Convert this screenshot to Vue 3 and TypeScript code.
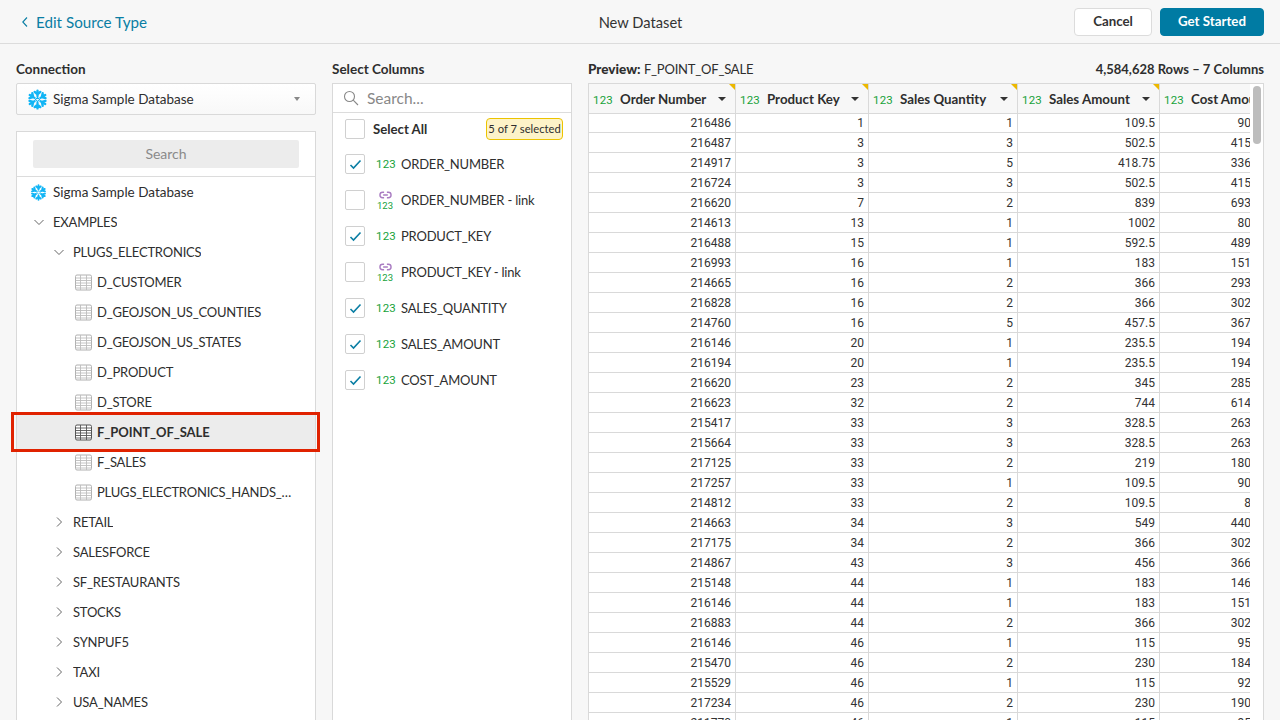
<script setup lang="ts">
interface TreeRow { label: string; depth: number; kind: 'open' | 'closed' | 'table' | 'db'; selected?: boolean }
const tree: TreeRow[] = [
  { label: 'Sigma Sample Database', depth: 0, kind: 'db' },
  { label: 'EXAMPLES', depth: 0, kind: 'open' },
  { label: 'PLUGS_ELECTRONICS', depth: 1, kind: 'open' },
  { label: 'D_CUSTOMER', depth: 2, kind: 'table' },
  { label: 'D_GEOJSON_US_COUNTIES', depth: 2, kind: 'table' },
  { label: 'D_GEOJSON_US_STATES', depth: 2, kind: 'table' },
  { label: 'D_PRODUCT', depth: 2, kind: 'table' },
  { label: 'D_STORE', depth: 2, kind: 'table' },
  { label: 'F_POINT_OF_SALE', depth: 2, kind: 'table', selected: true },
  { label: 'F_SALES', depth: 2, kind: 'table' },
  { label: 'PLUGS_ELECTRONICS_HANDS_ON_LAB_DATA', depth: 2, kind: 'table' },
  { label: 'RETAIL', depth: 1, kind: 'closed' },
  { label: 'SALESFORCE', depth: 1, kind: 'closed' },
  { label: 'SF_RESTAURANTS', depth: 1, kind: 'closed' },
  { label: 'STOCKS', depth: 1, kind: 'closed' },
  { label: 'SYNPUF5', depth: 1, kind: 'closed' },
  { label: 'TAXI', depth: 1, kind: 'closed' },
  { label: 'USA_NAMES', depth: 1, kind: 'closed' },
]
const columns = [
  { label: 'ORDER_NUMBER', checked: true, link: false },
  { label: 'ORDER_NUMBER - link', checked: false, link: true },
  { label: 'PRODUCT_KEY', checked: true, link: false },
  { label: 'PRODUCT_KEY - link', checked: false, link: true },
  { label: 'SALES_QUANTITY', checked: true, link: false },
  { label: 'SALES_AMOUNT', checked: true, link: false },
  { label: 'COST_AMOUNT', checked: true, link: false },
]
const headers = ['Order Number', 'Product Key', 'Sales Quantity', 'Sales Amount', 'Cost Amount']
const rows: string[][] = [
  ['216486','1','1','109.5','90'],['216487','3','3','502.5','415'],['214917','3','5','418.75','336'],
  ['216724','3','3','502.5','415'],['216620','7','2','839','693'],['214613','13','1','1002','80'],
  ['216488','15','1','592.5','489'],['216993','16','1','183','151'],['214665','16','2','366','293'],
  ['216828','16','2','366','302'],['214760','16','5','457.5','367'],['216146','20','1','235.5','194'],
  ['216194','20','1','235.5','194'],['216620','23','2','345','285'],['216623','32','2','744','614'],
  ['215417','33','3','328.5','263'],['215664','33','3','328.5','263'],['217125','33','2','219','180'],
  ['217257','33','1','109.5','90'],['214812','33','2','109.5','8'],['214663','34','3','549','440'],
  ['217175','34','2','366','302'],['214867','43','3','456','366'],['215148','44','1','183','146'],
  ['216146','44','1','183','151'],['216883','44','2','366','302'],['216146','46','1','115','95'],
  ['215470','46','2','230','184'],['215529','46','1','115','92'],['217234','46','2','230','190'],
  ['211770','46','1','115','95'],
]
const armAngles = [0, 60, 120, 180, 240, 300]
</script>

<template>
  <div class="page">
    <header class="topbar">
      <a class="back">
        <svg width="8" height="12" viewBox="0 0 8 12"><path d="M6 1.500 1.800 6 6 10.500" fill="none" stroke="#0a7ea4" stroke-width="1.100" /></svg>
        <span>Edit Source Type</span>
      </a>
      <div class="title">New Dataset</div>
      <div class="actions">
        <button class="btn cancel">Cancel</button>
        <button class="btn primary">Get Started</button>
      </div>
    </header>

    <main class="body">
      <section class="left">
        <h3 class="label">Connection</h3>
        <div class="select">
          <svg class="flake" width="21" height="21" viewBox="0 0 24 24"><use href="#flake" /></svg>
          <span class="select-text">Sigma Sample Database</span>
          <span class="caret"></span>
        </div>
        <div class="tree">
          <div class="tree-search"><div class="tree-search-box">Search</div></div>
          <div class="tree-list">
            <div v-for="row in tree" :key="row.label" class="tree-row" :class="[`d${row.depth}`, { selected: row.selected }]">
              <svg v-if="row.kind === 'db'" class="db-icon" width="17" height="17" viewBox="0 0 24 24"><use href="#flake" /></svg>
              <svg v-else-if="row.kind === 'open'" class="chev" width="12" height="12" viewBox="0 0 12 12"><path d="M1.500 4l4.500 4.500L10.500 4" fill="none" stroke="#666" stroke-width="1" /></svg>
              <svg v-else-if="row.kind === 'closed'" class="chev" width="12" height="12" viewBox="0 0 12 12"><path d="M4 1.500 8.500 6 4 10.500" fill="none" stroke="#666" stroke-width="1" /></svg>
              <svg v-else class="tbl" width="17" height="17" viewBox="0 0 17 17">
                <rect x=".5" y="1" width="16" height="15" rx="1.500" fill="#fff" :stroke="row.selected ? '#555' : '#b0b0b0'" />
                <path d="M.5 4h16M.5 6.500h16M.5 9h16M.5 11.500h16M.5 14h16M5.500 1v15M11.500 1v15" fill="none" :stroke="row.selected ? '#555' : '#bdbdbd'" stroke-width=".9" />
              </svg>
              <span class="tree-text" :class="{ caps: row.kind !== 'db' }">{{ row.label }}</span>
            </div>
          </div>
          <div class="highlight"></div>
        </div>
      </section>

      <section class="middle">
        <h3 class="label">Select Columns</h3>
        <div class="cols">
          <div class="col-search">
            <svg width="16" height="16" viewBox="0 0 16 16"><circle cx="6.500" cy="6.500" r="5" fill="none" stroke="#888" stroke-width="1.100" /><path d="M10.200 10.200 15 15" stroke="#888" stroke-width="1.100" /></svg>
            <span>Search...</span>
          </div>
          <div class="all-row">
            <span class="check"></span>
            <span class="all-text">Select All</span>
            <span class="badge">5 of 7 selected</span>
          </div>
          <div v-for="c in columns" :key="c.label" class="col-row">
            <span class="check">
              <svg v-if="c.checked" width="13" height="11" viewBox="0 0 13 11"><path d="M1.500 6 4.500 9 11.500 1.500" fill="none" stroke="#0a7ea4" stroke-width="1.600" /></svg>
            </span>
            <span v-if="c.link" class="type linked">
              <svg width="13" height="8" viewBox="0 0 14 8"><path d="M5.500 1H4a3 3 0 0 0 0 6h1.500M8.500 1H10a3 3 0 0 1 0 6H8.500M4.500 4h5" fill="none" stroke="#a97cc2" stroke-width="1.500" /></svg>
              <span>123</span>
            </span>
            <span v-else class="type">123</span>
            <span class="col-name caps">{{ c.label }}</span>
          </div>
        </div>
      </section>

      <section class="right">
        <div class="preview-head">
          <h3 class="label"><b>Preview:</b> <span class="caps">F_POINT_OF_SALE</span></h3>
          <div class="count">4,584,628 Rows – 7 Columns</div>
        </div>
        <div class="grid-wrap">
          <div class="grid-clip">
            <table class="grid">
              <colgroup>
                <col class="c1" /><col class="c2" /><col class="c3" /><col class="c4" /><col class="c5" />
              </colgroup>
              <thead>
                <tr>
                  <th v-for="(h, i) in headers" :key="h">
                    <div class="th-in">
                      <span class="th-type">123</span>
                      <span class="th-name">{{ h }}</span>
                      <span v-if="i < 4" class="th-caret"></span>
                      <span v-if="i < 4" class="flag"></span>
                    </div>
                  </th>
                </tr>
              </thead>
              <tbody>
                <tr v-for="(r, i) in rows" :key="i">
                  <td v-for="(v, j) in r" :key="j">{{ v }}</td>
                </tr>
              </tbody>
            </table>
          </div>
          <div class="scroll"><div class="thumb"></div></div>
        </div>
      </section>
    </main>

    <svg width="0" height="0" class="defs">
      <symbol id="flake" viewBox="0 0 24 24">
        <g fill="none" stroke="#12b5f5" stroke-width="2.700" stroke-linecap="round" stroke-linejoin="round">
          <path v-for="a in armAngles" :key="a" :transform="`rotate(${a} 12 12)`" d="M12 1.800v6.200M8.800 3.300 12 6.300l3.200-3" />
        </g>
        <path d="M12 9.600 14.400 12 12 14.400 9.600 12Z" fill="none" stroke="#12b5f5" stroke-width="1.200" />
      </symbol>
    </svg>
  </div>
</template>

<style>
html, body { margin: 0; padding: 0; overflow: hidden; }
</style>

<style scoped>
.page {
  width: 1280px;
  height: 720px;
  overflow: hidden;
  background: #f7f7f7;
  color: #2e2e2e;
  font-family: "Lato", "Noto Sans", sans-serif;
  font-size: 13.5px;
  display: flex;
  flex-direction: column;
}
.caps { font-size: 13px; letter-spacing: -0.2px; }
.selected .caps { letter-spacing: -0.08px; }
.defs { position: absolute; }
.topbar {
  height: 43px;
  flex: none;
  border-bottom: 1px solid #dcdcdc;
  display: grid;
  grid-template-columns: 1fr auto 1fr;
  align-items: center;
  padding: 0 16px 0 21px;
}
.back { display: flex; align-items: center; gap: 7px; color: #0a7ea4; font-size: 15.200px; padding-top: 1px; }
.title { font-size: 14.700px; color: #333; margin-left: -4px; padding-top: 1px; }
.actions { display: flex; justify-content: flex-end; gap: 8px; }
.btn {
  font-family: inherit;
  font-size: 13.300px;
  font-weight: 700;
  height: 28px;
  border-radius: 4px;
  padding: 0 0 2px;
  box-sizing: border-box;
}
.cancel { width: 78px; background: #fff; border: 1px solid #dcdcdc; color: #333; }
.primary { width: 104px; background: #007ba3; border: 1px solid #007ba3; color: #fff; }
.body { flex: 1; display: flex; min-height: 0; padding: 0 16px; }
.label { margin: 0; font-size: 13.500px; font-weight: 700; line-height: 18px; color: #2e2e2e; }
.left { width: 300px; flex: none; padding-top: 16px; }
.select {
  margin-top: 5px;
  height: 32px;
  box-sizing: border-box;
  border: 1px solid #d9d9d9;
  border-radius: 2px;
  background: linear-gradient(#fff, #f8f8f8);
  display: flex;
  align-items: center;
  padding: 0 15px 0 10px;
  gap: 5px;
}
.select-text { flex: 1; }
.caret { width: 0; height: 0; border: 3.500px solid transparent; border-top: 4px solid #888; border-bottom: 0; }
.tree {
  position: relative;
  margin-top: 16px;
  height: 620px;
  border: 1px solid #d9d9d9;
  background: #fff;
}
.tree-search { height: 45px; padding: 8px 16px 0; border-bottom: 1px solid #dcdcdc; box-sizing: border-box; }
.tree-search-box { height: 28px; border-radius: 2px; background: #ececec; color: #8a8a8a; text-align: center; line-height: 28px; font-size: 14px; }
.tree-row { height: 30px; display: flex; align-items: center; box-sizing: border-box; position: relative; }
.tree-row.selected { background: #ececec; box-shadow: 0 -3px 0 #ececec, 0 3px 0 #ececec; font-weight: 700; }
.d0 { padding-left: 16px; }
.d1 { padding-left: 36px; }
.d2 { padding-left: 58px; }
.chev { width: 12px; margin-right: 8px; flex: none; }
.db-icon { margin: 0 6px 0 -3px; flex: none; }
.tbl { margin-right: 5px; flex: none; }
.tree-text { overflow: hidden; white-space: nowrap; text-overflow: ellipsis; width: 199px; }
.d0 .tree-text, .d1 .tree-text { width: auto; }
.highlight {
  position: absolute;
  left: -6px;
  right: -5px;
  top: 280px;
  height: 40px;
  border: 3px solid #e02200;
  box-sizing: border-box;
  pointer-events: none;
}
.middle { width: 240px; flex: none; margin-left: 16px; padding-top: 16px; }
.cols {
  margin-top: 5px;
  height: 640px;
  border: 1px solid #d9d9d9;
  background: #fff;
}
.col-search {
  height: 29px;
  box-sizing: border-box;
  border-bottom: 1px solid #dcdcdc;
  display: flex;
  align-items: center;
  gap: 8px;
  padding-left: 10px;
  color: #888;
  font-size: 15.500px;
}
.all-row { height: 33px; box-sizing: border-box; padding: 0 8px 1px 12px; display: flex; align-items: center; }
.check {
  width: 20px;
  height: 20px;
  box-sizing: border-box;
  border: 1px solid #d0d0d0;
  border-radius: 2px;
  background: #fff;
  display: flex;
  align-items: center;
  justify-content: center;
  flex: none;
}
.all-text { margin-left: 8px; font-weight: 700; flex: 1; font-size: 13.200px; }
.badge {
  width: 77px;
  text-align: center;
  height: 22px;
  line-height: 20px;
  box-sizing: border-box;
  border: 1px solid #ecc400;
  border-radius: 4px;
  background: #fdf3c8;
  font-size: 11.200px;
  white-space: nowrap;
}
.col-row { height: 36px; display: flex; align-items: center; padding-left: 12px; }
.type { width: 18px; margin-left: 11px; font-size: 11.500px; letter-spacing: .2px; color: #17a23a; text-align: center; flex: none; font-family: "Roboto", sans-serif; }
.linked { display: flex; flex-direction: column; align-items: center; line-height: 10px; font-size: 9.500px; letter-spacing: 0; gap: 2px; margin-top: 2px; }
.col-name { margin-left: 7px; }
.right { flex: 1; min-width: 0; margin-left: 16px; padding-top: 16px; }
.preview-head { display: flex; justify-content: space-between; height: 18px; }
.preview-head .caps { font-weight: 400; }
.count { font-weight: 700; line-height: 18px; font-size: 13px; }
.grid-wrap {
  margin-top: 5px;
  height: 640px;
  width: 676px;
  display: flex;
  border: 1px solid #d9d9d9;
  border-bottom: 0;
  background: #fff;
  box-sizing: border-box;
}
.grid-clip { width: 661px; overflow: hidden; flex: none; }
.grid { border-collapse: separate; border-spacing: 0; table-layout: fixed; width: 662px; }
.c1 { width: 147px; }
.c2 { width: 133px; }
.c3 { width: 149px; }
.c4 { width: 142px; }
.c5 { width: 91px; }
th {
  height: 29px;
  padding: 0;
  background: #f7f7f7;
  border-right: 1px solid #d9d9d9;
  border-bottom: 1px solid #d9d9d9;
  text-align: left;
  font-weight: 700;
}
.th-in { position: relative; height: 29px; display: flex; align-items: center; padding-left: 4px; overflow: hidden; white-space: nowrap; }
.th-type { color: #17a23a; font-size: 11.500px; letter-spacing: .2px; font-weight: 400; width: 27px; flex: none; font-family: "Roboto", sans-serif; padding-top: 2px; }
.th-name { flex: 1; font-size: 13.300px; }
.th-caret { width: 0; height: 0; border: 4px solid transparent; border-top: 4px solid #333; border-bottom: 0; margin-right: 9px; flex: none; }
.flag { position: absolute; top: 0; right: 0; width: 0; height: 0; border-top: 6px solid #ecb800; border-left: 6px solid transparent; }
td {
  height: 18px;
  padding: 1px 4px 0 0;
  border-right: 1px solid #d9d9d9;
  border-bottom: 1px solid #d9d9d9;
  text-align: right;
  font-family: "Roboto", sans-serif;
  font-size: 12px;
  line-height: 18px;
  color: #333;
  white-space: nowrap;
  overflow: hidden;
}
tbody tr:first-child td { height: 17px; line-height: 17px; padding-top: 1px; }
td:last-child { padding-right: 0; border-right: 0; }
.scroll { width: 13px; flex: none; position: relative; }
.thumb { position: absolute; top: 2px; left: 3px; width: 8px; height: 58px; border-radius: 4px; background: #bdbdbd; }
</style>
